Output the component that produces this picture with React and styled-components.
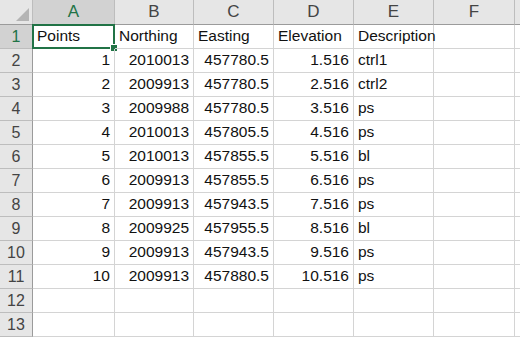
import React from "react";
import styled, { createGlobalStyle } from "styled-components";

const Global = createGlobalStyle`
  html, body { margin: 0; padding: 0; background: #fff; }
  body { font-family: "Liberation Sans", Arial, sans-serif; }
`;

const columns = ["A", "B", "C", "D", "E", "F"];

const rows = [
  ["Points", "Northing", "Easting", "Elevation", "Description"],
  [1, 2010013, "457780.5", "1.516", "ctrl1"],
  [2, 2009913, "457780.5", "2.516", "ctrl2"],
  [3, 2009988, "457780.5", "3.516", "ps"],
  [4, 2010013, "457805.5", "4.516", "ps"],
  [5, 2010013, "457855.5", "5.516", "bl"],
  [6, 2009913, "457855.5", "6.516", "ps"],
  [7, 2009913, "457943.5", "7.516", "ps"],
  [8, 2009925, "457955.5", "8.516", "bl"],
  [9, 2009913, "457943.5", "9.516", "ps"],
  [10, 2009913, "457880.5", "10.516", "ps"],
  [],
  [],
];

function App() {
  return (
    <>
      <Global />
      <St.Sheet>
        <St.Corner>
          <St.Triangle />
        </St.Corner>
        {columns.map((c, i) => (
          <St.ColHead key={c} $active={i === 0}>
            {c}
          </St.ColHead>
        ))}
        <St.ColHead $tail />
        {rows.map((row, r) => (
          <React.Fragment key={r}>
            <St.RowHead $active={r === 0}>{r + 1}</St.RowHead>
            {columns.map((c, ci) => {
              const v = row[ci];
              const numeric = r > 0 && ci < 4;
              return (
                <St.Cell key={c} $right={numeric}>
                  {v}
                  {r === 0 && ci === 0 && (
                    <St.Selection>
                      <St.Handle />
                    </St.Selection>
                  )}
                </St.Cell>
              );
            })}
            <St.Cell $tail />
          </React.Fragment>
        ))}
      </St.Sheet>
    </>
  );
}

export default App;

const St = {
  Sheet: styled.div`
    display: grid;
    grid-template-columns: 33px 82px 79px 80px 80px 80px 81px 1fr;
    grid-auto-rows: 24px;
    grid-template-rows: 25px;
    width: 520px;
    height: 341px;
    overflow: hidden;
    background: #fff;
  `,
  Corner: styled.div`
    position: relative;
    background: #e6e6e6;
    border-right: 1px solid #bdbdbd;
    border-bottom: 1px solid #9b9b9b;
  `,
  Triangle: styled.div`
    position: absolute;
    right: 3px;
    bottom: 3px;
    width: 0;
    height: 0;
    border-left: 13px solid transparent;
    border-bottom: 13px solid #b4b4b4;
  `,
  ColHead: styled.div`
    display: flex;
    align-items: center;
    justify-content: center;
    background: ${(p) => (p.$active ? "#d2d2d2" : "#e6e6e6")};
    color: ${(p) => (p.$active ? "#217346" : "#444")};
    font-size: 17px;
    border-right: ${(p) => (p.$tail ? "none" : "1px solid #bdbdbd")};
    border-bottom: 1px solid #9b9b9b;
    box-sizing: border-box;
  `,
  RowHead: styled.div`
    display: flex;
    align-items: flex-end;
    justify-content: center;
    padding-bottom: 2px;
    background: ${(p) => (p.$active ? "#d2d2d2" : "#e6e6e6")};
    color: ${(p) => (p.$active ? "#217346" : "#444")};
    font-size: 16px;
    border-right: 1px solid #9b9b9b;
    border-bottom: 1px solid #bdbdbd;
    box-sizing: border-box;
  `,
  Cell: styled.div`
    position: relative;
    display: flex;
    align-items: flex-end;
    justify-content: ${(p) => (p.$right ? "flex-end" : "flex-start")};
    padding: 0 4px 3px 4px;
    font-size: 15.5px;
    color: #111;
    white-space: nowrap;
    border-right: ${(p) => (p.$tail ? "none" : "1px solid #d4d4d4")};
    border-bottom: 1px solid #d4d4d4;
    box-sizing: border-box;
  `,
  Selection: styled.div`
    position: absolute;
    left: -1px;
    top: -1px;
    right: -1px;
    bottom: -1px;
    border: 2px solid #217346;
    pointer-events: none;
  `,
  Handle: styled.div`
    position: absolute;
    right: -5px;
    bottom: -5px;
    width: 6px;
    height: 6px;
    background: #217346;
    border: 1px solid #fff;
  `,
};
